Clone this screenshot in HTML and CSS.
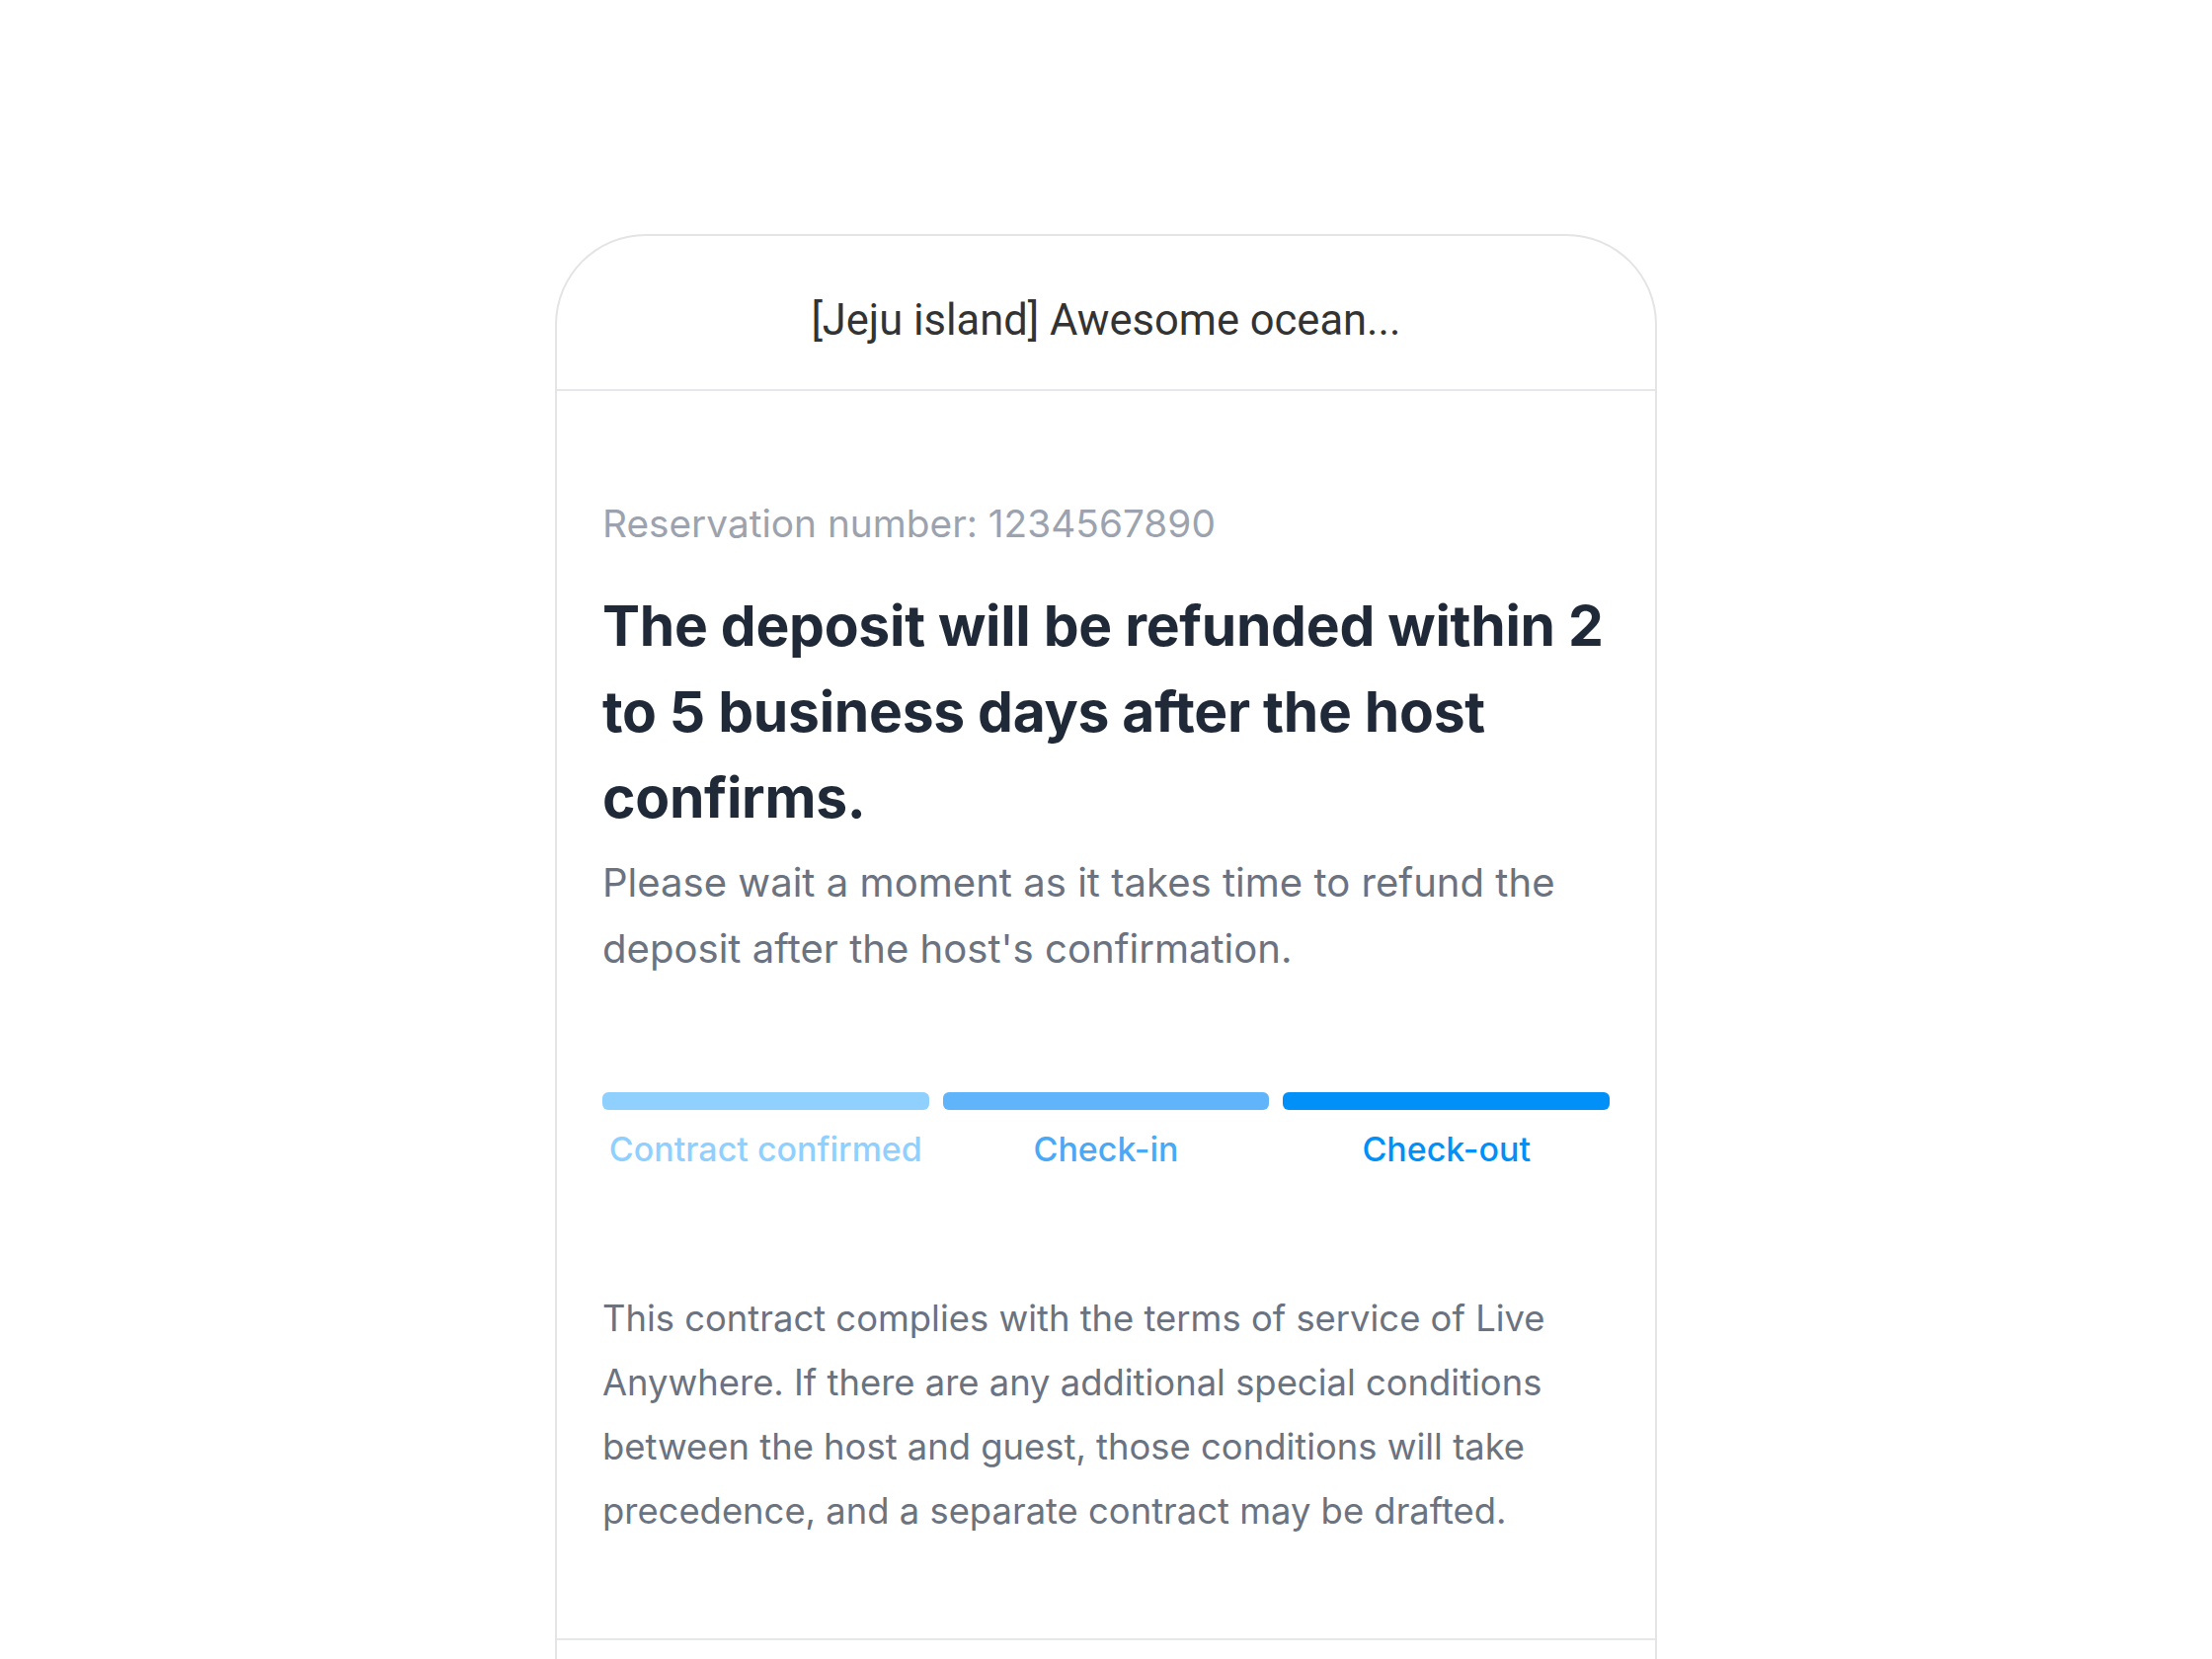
FILE: index.html
```html
<!DOCTYPE html>
<html lang="en">
<head>
  <meta charset="UTF-8">
  <title>Reservation Status</title>
  <link rel="stylesheet" href="styles.css">
</head>
<body>

  <div class="sheet">
    <div class="sheet-header">[Jeju island] Awesome ocean...</div>

    <div class="sheet-body">
      <div class="reservation">Reservation number: 1234567890</div>
      <h1>The deposit will be refunded within 2 to 5 business days after the host confirms.</h1>
      <p class="sub">Please wait a moment as it takes time to refund the deposit after the host's confirmation.</p>

      <div class="steps">
        <div class="step step-1">
          <div class="bar"></div>
          <div class="label">Contract confirmed</div>
        </div>
        <div class="step step-2">
          <div class="bar"></div>
          <div class="label">Check-in</div>
        </div>
        <div class="step step-3">
          <div class="bar"></div>
          <div class="label">Check-out</div>
        </div>
      </div>

      <p class="terms">This contract complies with the terms of service of Live Anywhere. If there are any additional special conditions between the host and guest, those conditions will take precedence, and a separate contract may be drafted.</p>
    </div>

    <div class="sheet-footer"></div>
  </div>

</body>
</html>
```

FILE: styles.css
```css
html, body {
  margin: 0;
  height: 100%;
  overflow: hidden;
  background: #fff;
}

body {
  font-family: 'Inter', 'Noto Sans', sans-serif;
}

.sheet {
  width: 1116px;
  box-sizing: border-box;
  margin: 237px auto 0;
  min-height: 1600px;
  border: 2px solid #e4e4e4;
  border-bottom: none;
  border-radius: 92px 92px 0 0;
}

.sheet-header {
  height: 157px;
  display: flex;
  align-items: center;
  justify-content: center;
  padding-top: 16px;
  box-sizing: border-box;
  border-bottom: 2px solid #e5e7eb;
  font-family: 'Roboto', 'Liberation Sans', sans-serif;
  font-size: 43.5px;
  color: #333;
}

.sheet-body {
  padding: 107px 46px 0;
}

.reservation {
  font-size: 38.8px;
  line-height: 54px;
  color: #9ca3af;
}

h1 {
  margin: 33px 0 0;
  font-size: 57px;
  line-height: 87px;
  font-weight: 700;
  letter-spacing: -0.3px;
  color: #1f2937;
}

.sub {
  margin: 9px 0 0;
  font-size: 40.1px;
  line-height: 67px;
  color: #6b7280;
}

.steps {
  display: flex;
  gap: 14px;
  margin-top: 112px;
}

.step {
  flex: 1;
  text-align: center;
}

.bar {
  height: 18px;
  border-radius: 6px;
}

.label {
  margin-top: 14px;
  font-size: 34px;
  line-height: 51px;
  font-weight: 500;
}

.step-1 .bar { background: #90d0ff; }
.step-1 .label { color: #90d0ff; }
.step-2 .bar { background: #60b4fa; }
.step-2 .label { color: #4aa8f5; }
.step-3 .bar { background: #0090f8; }
.step-3 .label { color: #0090f8; }

.terms {
  margin: 114px 0 0;
  font-size: 36.4px;
  line-height: 65px;
  color: #6b7280;
}

.sheet-footer {
  margin-top: 96px;
  border-top: 2px solid #e5e7eb;
}
```
